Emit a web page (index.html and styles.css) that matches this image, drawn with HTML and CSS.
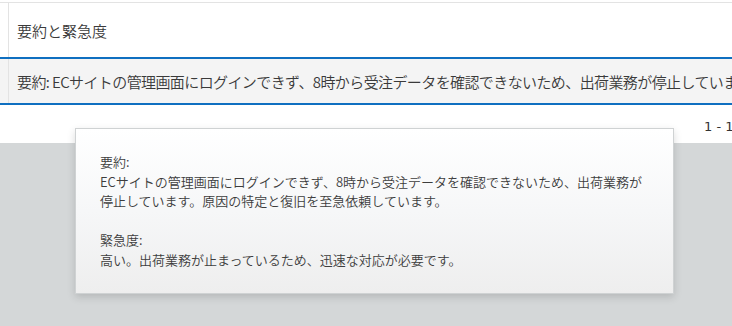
FILE: index.html
```html
<!DOCTYPE html>
<html lang="ja">
<head>
<meta charset="utf-8">
<link rel="stylesheet" href="styles.css">
</head>
<body>
<div class="page">
  <div class="grid">
    <div class="row head">
      <div class="gutter"></div>
      <div class="cell">要約と緊急度</div>
    </div>
    <div class="row data">
      <div class="gutter"></div>
      <div class="cell">要約: ECサイトの管理画面にログインできず、8時から受注データを確認できないため、出荷業務が停止しています。原因の特定と復旧を至急依頼しています。</div>
    </div>
  </div>
  <div class="pager">1 - 1 / 1</div>
  <div class="backdrop"></div>
  <div class="tooltip">
    <p>要約:<br>ECサイトの管理画面にログインできず、8時から受注データを確認できないため、出荷業務が<br>停止しています。原因の特定と復旧を至急依頼しています。</p>
    <p>緊急度:<br>高い。出荷業務が止まっているため、迅速な対応が必要です。</p>
  </div>
</div>
</body>
</html>
```

FILE: styles.css
```css
html, body {
  margin: 0;
  padding: 0;
  background: #ffffff;
}
body {
  font-family: "Noto Sans CJK JP", "Noto Sans", sans-serif;
  color: #3a3a3a;
}
.page {
  position: relative;
  width: 732px;
  height: 326px;
  overflow: hidden;
  display: flex;
  flex-direction: column;
}
.grid {
  margin-top: 2px;
  border-top: 1px solid #e3e3e3;
}
.row {
  display: flex;
  white-space: nowrap;
}
.gutter {
  width: 8px;
  flex: none;
  border-right: 1px solid #e3e3e3;
}
.cell {
  display: flex;
  align-items: center;
  padding-left: 8px;
  font-size: 15px;
  font-weight: 350;
  color: #3a3a3a;
}
.head {
  height: 54px;
}
.data {
  height: 44px;
  background: #f4f4f4;
  border-top: 2px solid #0f6fc0;
  border-bottom: 2px solid #0f6fc0;
}
.data .cell {
  letter-spacing: -0.6px;
}
.pager {
  height: 38px;
  padding-left: 704px;
  font-size: 13px;
  line-height: 44px;
  white-space: nowrap;
  color: #333333;
  font-family: "DejaVu Sans", sans-serif;
}
.backdrop {
  flex: 1;
  background: #d4d7d8;
}
.tooltip {
  position: absolute;
  left: 75px;
  top: 128px;
  width: 549px;
  height: 116px;
  padding: 23px 24px 25px 24px;
  border: 1px solid #cfd2d3;
  background: linear-gradient(#ffffff, #f6f7f8 50%, #eeeeee);
  box-shadow: 0 3px 8px rgba(0, 0, 0, 0.15);
  font-size: 13px;
  font-weight: 350;
  line-height: 19.5px;
  color: #3d3d3d;
  white-space: nowrap;
}
.tooltip p {
  margin: 0 0 19.5px 0;
}
```
